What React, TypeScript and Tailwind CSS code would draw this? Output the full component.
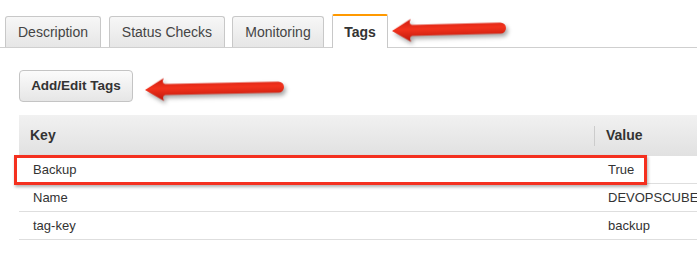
import React from "react";

function Arrow({ length, className }: { length: number; className: string }) {
  const L = length;
  return (
    <svg
      className={className}
      width={L + 12}
      height={34}
      viewBox={`-2 -17 ${L + 12} 34`}
      style={{ filter: "drop-shadow(2px 3px 2px rgba(0,0,0,0.35))", overflow: "visible" }}
    >
      <defs>
        <linearGradient id={`g${L}`} x1="0" y1="0" x2="0" y2="1">
          <stop offset="0" stopColor="#cc1a0e" />
          <stop offset="0.45" stopColor="#f2321c" />
          <stop offset="1" stopColor="#bb160b" />
        </linearGradient>
      </defs>
      <path
        d={`M0 0 L19 -11.5 Q16.5 -6.5 20 -5.5 L${L - 5.5} -5.5 A5.5 5.5 0 0 1 ${L - 5.5} 5.5 L20 5.5 Q16.5 6.5 19 11.5 Z`}
        fill={`url(#g${L})`}
      />
    </svg>
  );
}

export default function App() {
  const tabBase =
    "h-[31px] flex items-center justify-center border border-b-0 border-[#c8c8c8] rounded-t-[3px] bg-gradient-to-b from-[#f7f7f7] to-[#e6e6e6] text-[14px] text-[#444]";
  return (
    <div
      className="relative w-[697px] h-[254px] bg-white overflow-hidden"
      style={{ fontFamily: '"Liberation Sans", Arial, sans-serif' }}
    >
      {/* Tabs */}
      <div className="flex items-end h-[48px] border-b border-[#cfcfcf] pl-[5px]">
        <div className={`${tabBase} w-[96px]`}>Description</div>
        <div className={`${tabBase} w-[116px] ml-[8px]`}>Status Checks</div>
        <div className={`${tabBase} w-[92px] ml-[7px]`}>Monitoring</div>
        <div className="ml-[8px] w-[56px] h-[34px] mb-[-1px] flex items-center justify-center bg-white border-t-2 border-t-[#f90] border-x border-x-[#c8c8c8] rounded-t-[2px] text-[14px] font-bold text-[#333]">
          Tags
        </div>
      </div>

      {/* Button */}
      <div className="pl-[19px] pt-[22px]">
        <button className="w-[114px] h-[32px] rounded-[4px] border border-[#c4c4c4] bg-gradient-to-b from-[#fbfbfb] to-[#e6e6e6] text-[13.5px] font-bold text-[#333] flex items-center justify-center">
          Add/Edit Tags
        </button>
      </div>

      {/* Table */}
      <div className="ml-[19px] mt-[13px]">
        <div className="flex h-[41px] items-center bg-gradient-to-b from-[#f1f1f1] to-[#e1e1e1] text-[14px] font-bold text-[#333]">
          <div className="w-[575px] shrink-0 pl-[11px]">Key</div>
          <div className="h-[20px] shrink-0 border-l border-[#cccccc]" />
          <div className="pl-[11px]">Value</div>
        </div>
        {[
          ["Backup", "True"],
          ["Name", "DEVOPSCUBE-DEMO"],
          ["tag-key", "backup"],
        ].map(([k, v]) => (
          <div key={k} className="flex h-[28px] items-center border-b border-[#dedede] text-[13px] text-[#333] whitespace-nowrap">
            <div className="w-[575px] shrink-0 pl-[14px]">{k}</div>
            <div className="shrink-0 pl-[14px]">{v}</div>
          </div>
        ))}
      </div>

      {/* Red highlight box */}
      <div className="absolute left-[14px] top-[155px] w-[633px] h-[30px] border-[3px] border-[#f4301f] shadow-[1px_2px_3px_rgba(0,0,0,0.3)]" />

      {/* Arrows */}
      <Arrow length={114} className="absolute left-[390px] top-[14px] -rotate-[1.5deg] origin-left" />
      <Arrow length={139} className="absolute left-[143px] top-[73px] -rotate-[1.2deg] origin-left" />
    </div>
  );
}
